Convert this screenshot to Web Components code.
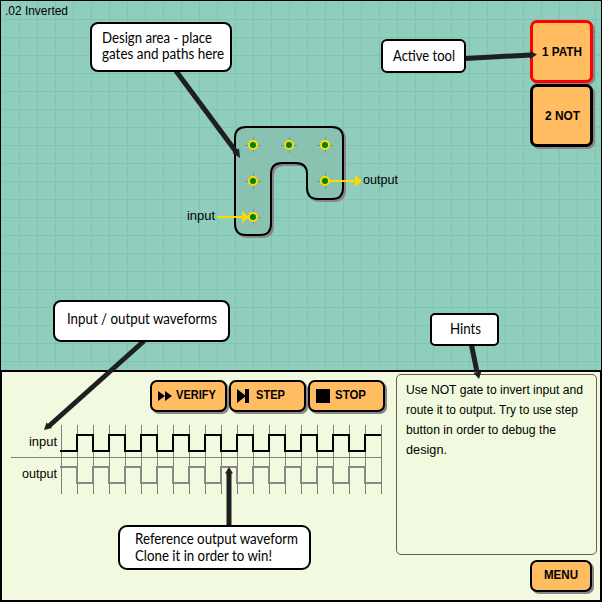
<!DOCTYPE html>
<html lang="en"><head><meta charset="utf-8"><title>.02 Inverted</title>
<style>html,body{margin:0;background:#000}body{width:602px;height:602px;overflow:hidden;font-family:"Liberation Sans",Arial,sans-serif;color:#000}</style>
</head><body>
<circuit-game></circuit-game>
<script>
const define=(name,render)=>customElements.define(name,class extends HTMLElement{
  connectedCallback(){ if(!this.shadowRoot){this.attachShadow({mode:'open'}).innerHTML=render(this);} }
});
const a=(e,n,d='')=>e.getAttribute(n)??d;

// One line of text set to an exact advance width.
define('fit-text',e=>{
  const w=a(e,'w'),s=a(e,'size','12.5');
  return `<style>:host{display:block;flex:none;width:${w}px;height:12px}svg{display:block;overflow:visible}
  text{font-size:${s}px;font-family:inherit;font-weight:inherit;fill:currentColor}</style>
  <svg width="${w}" height="12"><text x="0" y="11" textLength="${w}" lengthAdjust="spacingAndGlyphs">${e.textContent}</text></svg>`;
});

define('game-button',e=>`<style>
  :host{display:flex;box-sizing:border-box;width:${a(e,'w','77')}px;height:${a(e,'h','32')}px;background:#ffbc61;border:${a(e,'b','2')}px solid ${a(e,'edge','#000')};border-radius:7px;box-shadow:2px 2px 0 0 #8b8588;font-weight:bold;align-items:center;padding-left:${a(e,'pad','6')}px}
  .icon{flex:none;display:flex;width:${a(e,'icon','0')}px}
  .label{padding-bottom:${a(e,'lift','4')}px}
  </style><span class="icon"><slot name="icon"></slot></span><span class="label"><slot></slot></span>`);

define('call-out',e=>`<style>
  :host{position:absolute;box-sizing:border-box;left:${a(e,'x')}px;top:${a(e,'y')}px;width:${a(e,'w')}px;height:${a(e,'h')}px;background:#fff;border:2px solid #000;border-radius:${a(e,'r','8')}px;padding:${a(e,'pt')}px 0 0 ${a(e,'pl')}px;display:flex;flex-direction:column;gap:${a(e,'gap','4')}px;font-family:Lato,"Open Sans",sans-serif}
  </style><slot></slot>`);

define('design-area',()=>{
  const nodes=[[253,145],[289,145],[325,145],[253,181],[325,181],[253,217]];
  const board='M246 127H332Q343 127 343 138V188Q343 199 332 199H318Q307 199 307 188V174Q307 163 296 163H282Q271 163 271 174V224Q271 235 260 235H246Q235 235 235 224V138Q235 127 246 127Z';
  return `<style>
  :host{display:block;position:relative;box-sizing:border-box;height:370px;border:1px solid #000;border-bottom:0;background:#8fcdbc}
  .canvas{position:absolute;left:-1px;top:-1px}
  .title{position:relative;padding:3px 0 0 3.5px}
  .tools{position:absolute;right:8px;top:19px;display:flex;flex-direction:column;gap:1px}
  .in,.out{position:absolute}.in{left:186px;top:208px}.out{left:362px;top:172px}
  </style>
  <svg class="canvas" width="602" height="370">
   <defs><pattern id="grid" x="1" y="1" width="18" height="18" patternUnits="userSpaceOnUse"><path d="M18 0H0V18" fill="none" stroke="#83c1b0" stroke-width="2"/></pattern></defs>
   <rect x="2" y="2" width="599" height="368" fill="url(#grid)"/>
   <path transform="translate(2 2)" fill="#8b8588" stroke="#8b8588" stroke-width="2" d="${board}"/>
   <path fill="#8ac2b2" stroke="#000" stroke-width="2" d="${board}"/>
   ${nodes.map(([x,y])=>`<path d="M${x-8} ${y+.5}h16M${x+.5} ${y-8}v16" stroke="#6b9a8d"/>`).join('')}
   <path d="M217 217H243M329 181H356" stroke="#ffda00" stroke-width="2"/>
   <path d="M242 211L249 217L242 223ZM355 175L362 181L355 187Z" fill="#ffda00"/>
   ${nodes.map(([x,y])=>`<circle cx="${x}" cy="${y}" r="4" fill="#008000" stroke="#ffda00" stroke-width="2"/>`).join('')}
  </svg>
  <div class="title"><fit-text w="63">.02 Inverted</fit-text></div>
  <fit-text class="in" w="28">input</fit-text><fit-text class="out" w="35">output</fit-text>
  <div class="tools">
   <game-button w="63" h="63" b="3" edge="#f00" pad="9" lift="2"><fit-text w="40">1 PATH</fit-text></game-button>
   <game-button w="63" h="63" b="3" pad="11.5" lift="2"><fit-text w="35">2 NOT</fit-text></game-button>
  </div>`;
});

define('wave-forms',()=>{
  let grid='',i='M-1 26H16',o='M-1 42H16';
  for(let k=0;k<=20;k++)grid+=`M${k*16+.5} 0V69`;
  for(let k=1;k<20;k++){i+=`V${k%2?10:26}H${16*(k+1)}`;o+=`V${k%2?58:42}H${16*(k+1)}`;}
  return `<style>:host{display:flex;gap:4px}.labels{width:46px;display:flex;flex-direction:column;align-items:flex-end;gap:20px;padding-top:10px}svg{overflow:visible}</style>
  <div class="labels"><fit-text w="28">input</fit-text><fit-text w="35">output</fit-text></div>
  <svg width="322" height="70"><path d="${grid}M-50 32.5H321" stroke="#7d8178" fill="none"/>
  <path d="${o}" fill="none" stroke="#888" stroke-width="2"/><path d="${i}" fill="none" stroke="#000" stroke-width="2"/></svg>`;
});

define('hint-panel',()=>`<style>:host{display:flex;flex-direction:column;gap:8px;box-sizing:border-box;width:201px;height:181px;border:1px solid #6b5b50;border-radius:5px;padding:8px 0 0 9px}</style>
  <fit-text w="177">Use NOT gate to invert input and</fit-text><fit-text w="172">route it to output. Try to use step</fit-text><fit-text w="150">button in order to debug the</fit-text><fit-text w="41">design.</fit-text>`);

define('control-panel',()=>`<style>
  :host{display:grid;grid-template-columns:394px 202px;box-sizing:border-box;height:232px;border:2px solid #000;background:#f1fade}
  .left{padding-left:9px}.bar{display:flex;gap:2px;padding:8px 0 0 139px}
  wave-forms{padding-top:13px}
  .right{display:flex;flex-direction:column;align-items:flex-end;padding:2px 1px 0 0}
  game-button.menu{margin:5px 5px 0 0}svg{display:block}
  </style>
  <div class="left"><div class="bar">
   <game-button icon="18"><svg slot="icon" width="14" height="10"><path d="M0 0L7 5L0 10ZM7 0L14 5L7 10Z"/></svg><fit-text w="40">VERIFY</fit-text></game-button>
   <game-button icon="19"><svg slot="icon" width="13" height="14"><path d="M0 0L9 7L0 14ZM8 0H12V14H8Z"/></svg><fit-text w="29">STEP</fit-text></game-button>
   <game-button icon="19"><svg slot="icon" width="14" height="14"><path d="M0 0H14V14H0Z"/></svg><fit-text w="31">STOP</fit-text></game-button>
  </div><wave-forms></wave-forms></div>
  <div class="right"><hint-panel></hint-panel><game-button class="menu" w="62" pad="12"><fit-text w="34">MENU</fit-text></game-button></div>`);

define('pointer-layer',()=>`<style>:host{position:absolute;inset:0}</style><svg width="602" height="602">
  <g stroke="#1f1f1f" stroke-width="5" fill="none"><path d="M176 71L237 153"/><path d="M465 58.5L531 55"/><path d="M144 341L49 426"/><path d="M471.5 345L477 372"/><path d="M229 526V472"/></g>
  <g fill="#1f1f1f"><path d="M240 158L232.5 153L239 148.5Z"/><path d="M537 54.500L530 51V59Z"/><path d="M44 430L46.5 422.5L52 428Z"/><path d="M479 379L473.5 373L481.5 371Z"/><path d="M229 467L225 473.5H233Z"/></g></svg>`);

define('circuit-game',()=>`<style>:host{display:block;position:relative;width:602px;height:602px}</style>
  <design-area></design-area><control-panel></control-panel><pointer-layer></pointer-layer>
  <call-out x="90" y="22" w="142" h="50" pl="10" pt="8"><fit-text size="14.5" w="110">Design area - place</fit-text><fit-text size="14.5" w="122">gates and paths here</fit-text></call-out>
  <call-out x="381" y="39" w="85" h="34" r="6" pl="10" pt="9"><fit-text size="14.5" w="62">Active tool</fit-text></call-out>
  <call-out x="53" y="300" w="177" h="42" pl="12" pt="11"><fit-text size="14.5" w="150">Input / output waveforms</fit-text></call-out>
  <call-out x="430" y="313" w="69" h="33" r="5" pl="17.5" pt="8"><fit-text size="14.5" w="31">Hints</fit-text></call-out>
  <call-out x="118" y="525" w="193" h="45" r="9" pl="14.5" pt="6" gap="5"><fit-text size="14.5" w="163">Reference output waveform</fit-text><fit-text size="14.5" w="137">Clone it in order to win!</fit-text></call-out>`);
</script></body></html>
